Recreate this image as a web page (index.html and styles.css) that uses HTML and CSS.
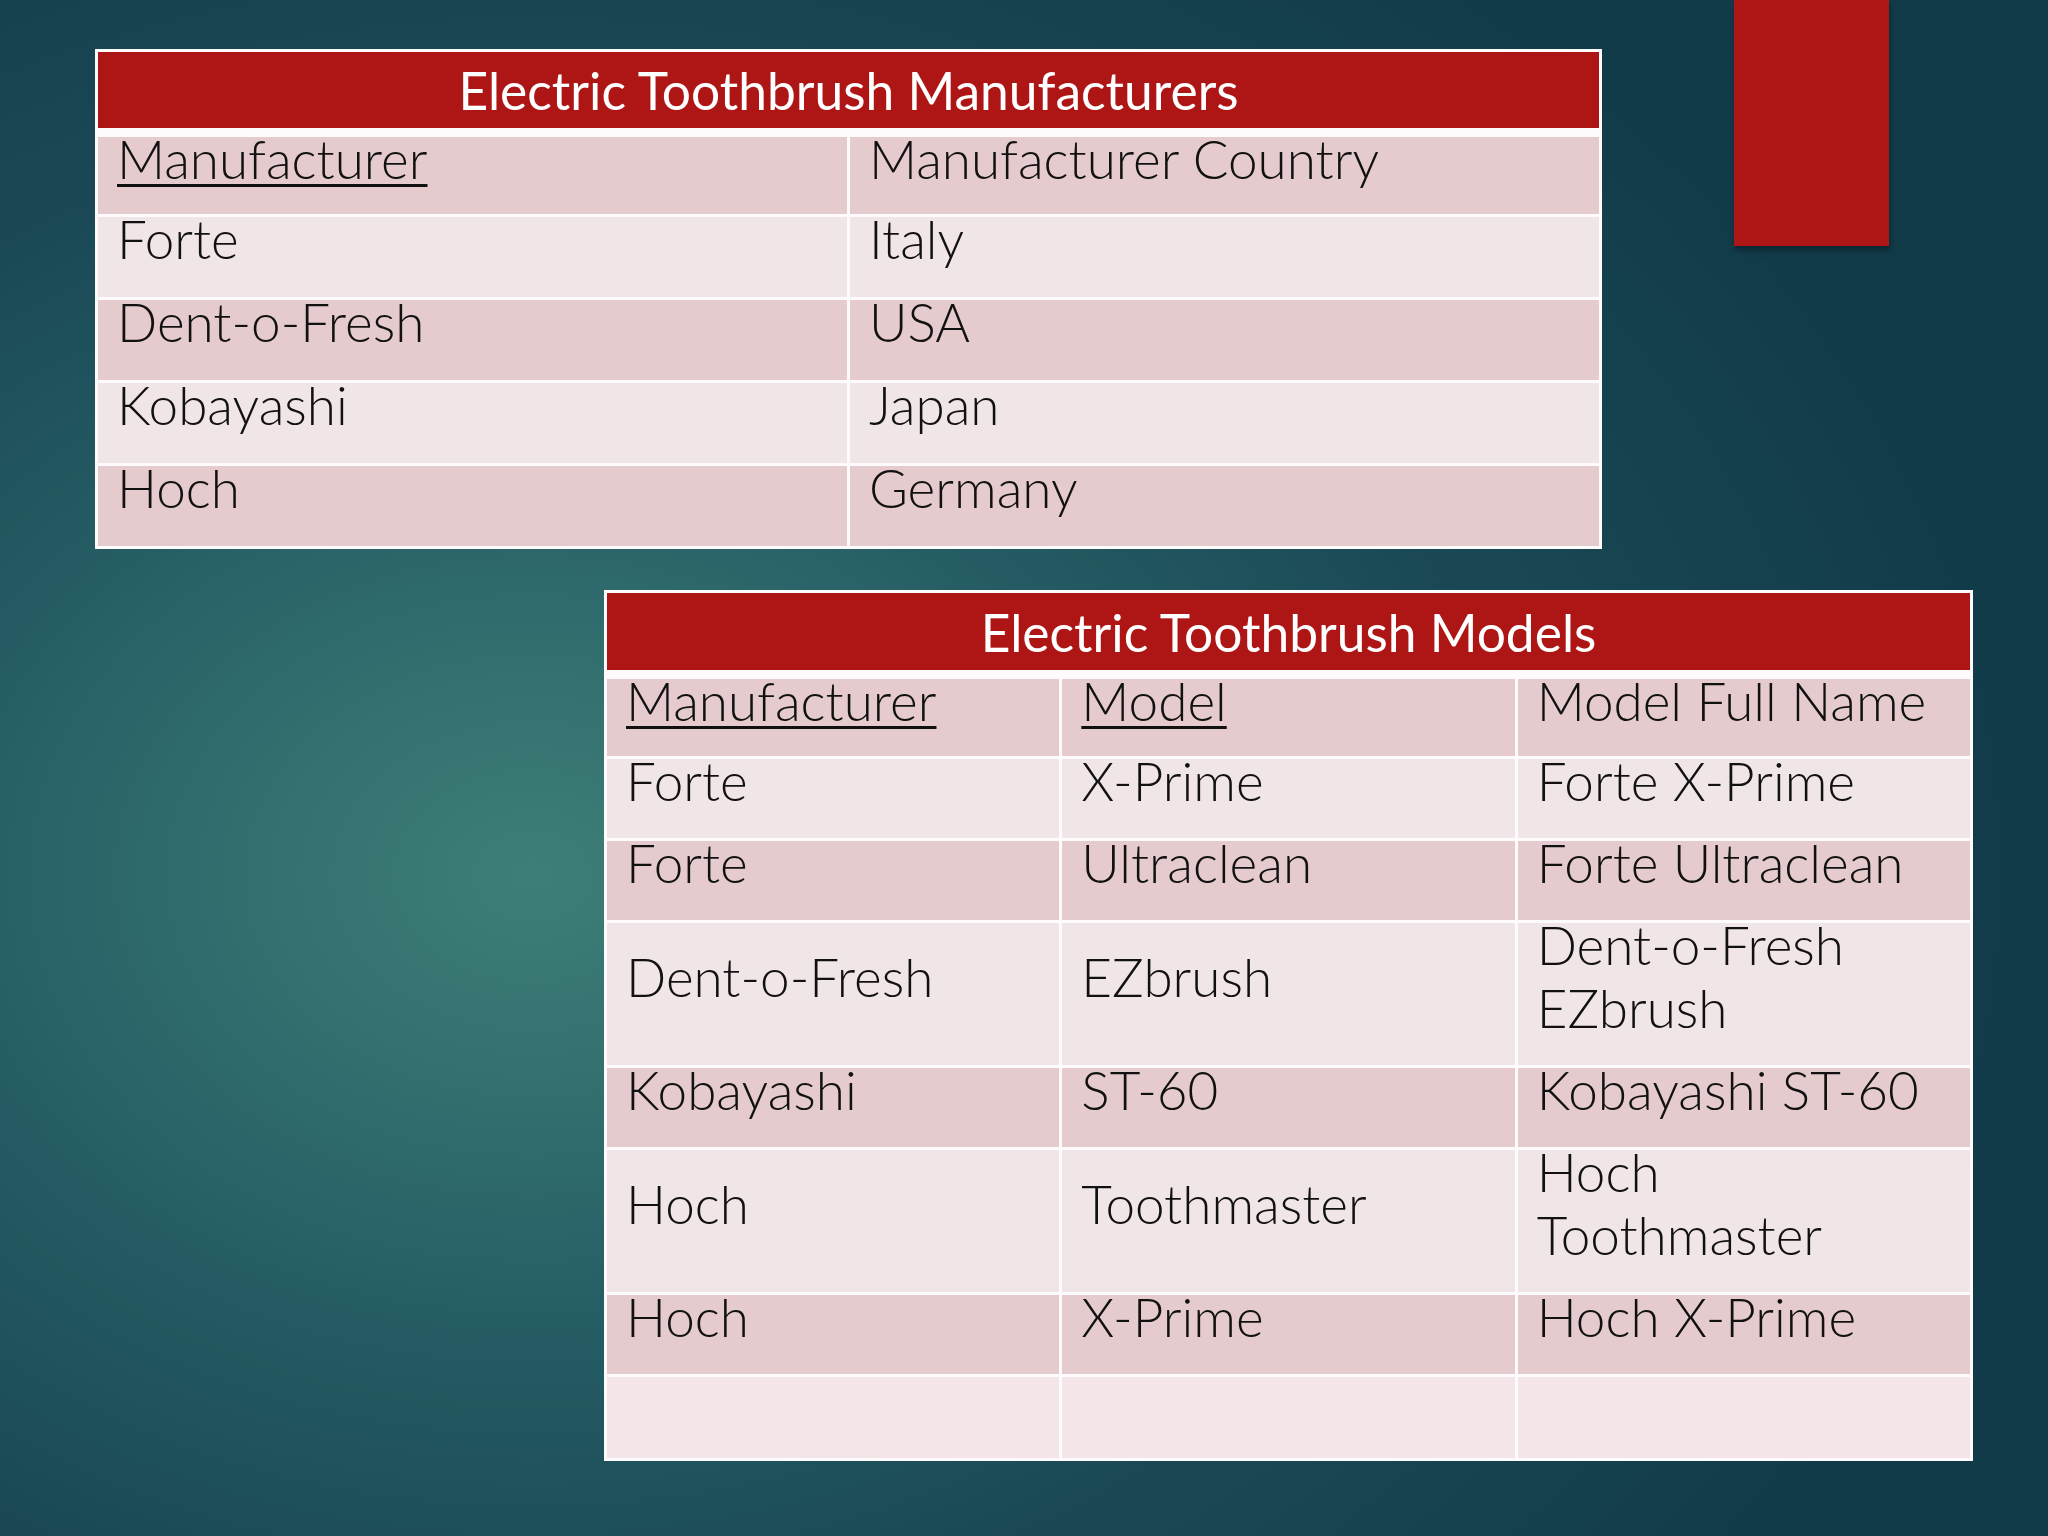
FILE: index.html
```html
<!DOCTYPE html>
<html lang="en">
<head>
<meta charset="utf-8">
<title>Electric Toothbrush Tables</title>
<link rel="stylesheet" href="styles.css">
</head>
<body>
<main class="slide">
  <div class="accent"></div>

  <section class="tbl tbl-makers">
    <div class="tbl-title">Electric Toothbrush Manufacturers</div>
    <div class="row head pink">
      <div class="cell"><span class="txt key">Manufacturer</span></div>
      <div class="cell"><span class="txt">Manufacturer Country</span></div>
    </div>
    <div class="row light">
      <div class="cell"><span class="txt">Forte</span></div>
      <div class="cell"><span class="txt">Italy</span></div>
    </div>
    <div class="row pink">
      <div class="cell"><span class="txt">Dent-o-Fresh</span></div>
      <div class="cell"><span class="txt">USA</span></div>
    </div>
    <div class="row light">
      <div class="cell"><span class="txt">Kobayashi</span></div>
      <div class="cell"><span class="txt">Japan</span></div>
    </div>
    <div class="row pink">
      <div class="cell"><span class="txt">Hoch</span></div>
      <div class="cell"><span class="txt">Germany</span></div>
    </div>
  </section>

  <section class="tbl tbl-models">
    <div class="tbl-title">Electric Toothbrush Models</div>
    <div class="row head pink">
      <div class="cell"><span class="txt key">Manufacturer</span></div>
      <div class="cell"><span class="txt key">Model</span></div>
      <div class="cell"><span class="txt">Model Full Name</span></div>
    </div>
    <div class="row light">
      <div class="cell"><span class="txt">Forte</span></div>
      <div class="cell"><span class="txt">X-Prime</span></div>
      <div class="cell"><span class="txt">Forte X-Prime</span></div>
    </div>
    <div class="row pink">
      <div class="cell"><span class="txt">Forte</span></div>
      <div class="cell"><span class="txt">Ultraclean</span></div>
      <div class="cell"><span class="txt">Forte Ultraclean</span></div>
    </div>
    <div class="row light">
      <div class="cell"><span class="txt">Dent-o-Fresh</span></div>
      <div class="cell"><span class="txt">EZbrush</span></div>
      <div class="cell"><span class="txt">Dent-o-Fresh<br>EZbrush</span></div>
    </div>
    <div class="row pink">
      <div class="cell"><span class="txt">Kobayashi</span></div>
      <div class="cell"><span class="txt">ST-60</span></div>
      <div class="cell"><span class="txt">Kobayashi ST-60</span></div>
    </div>
    <div class="row light">
      <div class="cell"><span class="txt">Hoch</span></div>
      <div class="cell"><span class="txt">Toothmaster</span></div>
      <div class="cell"><span class="txt">Hoch<br>Toothmaster</span></div>
    </div>
    <div class="row pink">
      <div class="cell"><span class="txt">Hoch</span></div>
      <div class="cell"><span class="txt">X-Prime</span></div>
      <div class="cell"><span class="txt">Hoch X-Prime</span></div>
    </div>
    <div class="row light last">
      <div class="cell"><span class="txt">&nbsp;</span></div>
      <div class="cell"><span class="txt">&nbsp;</span></div>
      <div class="cell"><span class="txt">&nbsp;</span></div>
    </div>
  </section>
</main>
</body>
</html>
```

FILE: styles.css
```css
html, body {
  margin: 0;
  padding: 0;
}

body {
  background: #123a48;
  font-family: "Lato", "Liberation Sans", sans-serif;
}

.slide {
  position: relative;
  width: 2048px;
  height: 1536px;
  box-sizing: border-box;
  padding-top: 49px;
  overflow: hidden;
  background:
    radial-gradient(ellipse 1500px 1150px at 26% 57%, #3f7e78 0%, #33706f 18%, #255c64 40%, #1a4955 65%, #123b49 100%);
}

.accent {
  position: absolute;
  left: 1734px;
  top: 0;
  width: 155px;
  height: 246px;
  background: #af1616;
  box-shadow: 1px 4px 6px rgba(5, 20, 30, 0.55);
}

.tbl {
  background: #fdfbfb;
  padding: 3px;
  display: flex;
  flex-direction: column;
  gap: 3px;
  box-sizing: border-box;
}

.tbl-makers {
  width: 1507px;
  margin-left: 95px;
}

.tbl-models {
  width: 1369px;
  margin-left: 604px;
  margin-top: 41px;
}

.tbl-title {
  height: 77px;
  margin-bottom: 6px;
  background: #ae1616;
  color: #ffffff;
  display: flex;
  align-items: center;
  justify-content: center;
  font-weight: 400;
  font-size: 51.5px;
  line-height: 62px;
  box-sizing: border-box;
}

.tbl-makers .tbl-title {
  height: 76px;
}

.row {
  display: grid;
  grid-template-columns: 1fr 1fr;
  column-gap: 3px;
}

.tbl-models .row {
  grid-template-columns: 1fr 1fr 1fr;
}

.cell {
  display: flex;
  flex-direction: column;
  justify-content: center;
  padding: 0 19px 26px;
  font-weight: 300;
  font-size: 53px;
  line-height: 63px;
  color: #111111;
}

.tbl-makers .cell {
  padding-bottom: 27px;
}

.row.head .cell {
  padding-bottom: 24px;
}

.row.pink .cell {
  background: #e6cbce;
}

.row.light .cell {
  background: #f1e6e7;
}

.row.last .cell {
  background: #f3e5e8;
  padding-bottom: 28px;
}

.txt {
  display: block;
  margin-top: -10px;
}

.key {
  text-decoration: underline;
  text-decoration-thickness: 3px;
  text-underline-offset: 5px;
}
```
